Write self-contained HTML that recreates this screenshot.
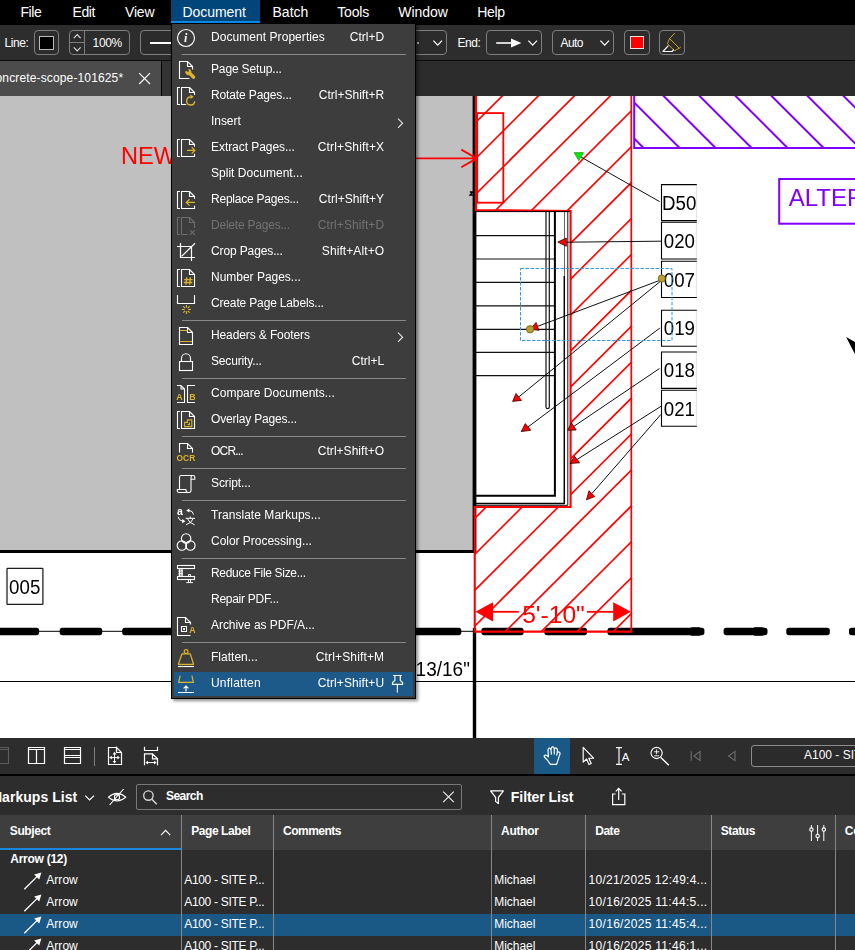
<!DOCTYPE html>
<html lang="en">
<head>
<meta charset="utf-8">
<title>Revu - Document menu</title>
<style>
*{box-sizing:border-box;margin:0;padding:0}
html,body{width:855px;height:950px;overflow:hidden;background:#2b2b2b}
body{position:relative;font-family:"Liberation Sans",Arial,sans-serif;color:#fff;font-size:12px}
.t{position:absolute;white-space:pre;line-height:1;display:block}
.abs{position:absolute}
#menubar{position:absolute;left:0;top:0;width:855px;height:25px;background:#000}
#menubar .hl{position:absolute;left:171px;top:0;width:88.6px;height:23px;background:#00467a;border-bottom:2.4px solid #0a8be6}
#toolbar{position:absolute;left:0;top:25px;width:855px;height:36px;background:#2d2d2d;border-bottom:1px solid #0c0c0c}
.ctl{position:absolute;top:5px;height:25px;border:1px solid #7e7e7e;border-radius:4px;background:#2c2c2c}
#tabbar{position:absolute;left:0;top:61px;width:855px;height:35px;background:#2c2c2c}
#tabbar .tab{position:absolute;left:0;top:0;width:161px;height:35px;background:#4c4c4c;border-right:0}
#tabbar .tab2{position:absolute;left:162px;top:0;width:120px;height:35px;background:#333}
#tabbar .gap{position:absolute;left:161px;top:0;width:1px;height:35px;background:#000}
svg.cv{position:absolute;left:0;top:96px;display:block;will-change:transform}
#btool{position:absolute;left:0;top:738px;width:855px;height:36px;background:#2d2d2d}
#bline{position:absolute;left:0;top:774px;width:855px;height:2px;background:#000}
#mkhead{position:absolute;left:0;top:776px;width:855px;height:39px;background:#2d2d2d}
#thead{position:absolute;left:0;top:815px;width:855px;height:35px;background:#3e3e3e}
#tbody{position:absolute;left:0;top:850px;width:855px;height:100px;background:#2d2d2d}
.row{position:absolute;left:0;width:855px;height:22px}
.row.sel{background:#1a5886}
.col{position:absolute;top:815px;width:1px;height:135px;background:#888}
#menu{position:absolute;left:171px;top:23px;width:245px;height:676px;background:#3d3d3d;border:1px solid #000;box-shadow:2px 2px 3px rgba(0,0,0,.45)}
#menu .sep{position:absolute;left:10px;width:224px;height:1px;background:#8a8a8a}
#menu .hl{position:absolute;left:2px;top:648px;width:239px;height:24px;background:#1d5a8a}
svg.ic{position:absolute;left:0;top:0;overflow:visible}
</style>
</head>
<body>
<div id="menubar"><div class="hl"></div><span class="t" style="left:20.50px;top:5.15px;font-size:14px;letter-spacing:-0.441px">File</span><span class="t" style="left:72.50px;top:5.15px;font-size:14px;letter-spacing:-0.381px">Edit</span><span class="t" style="left:125.00px;top:5.15px;font-size:14px;letter-spacing:-0.173px">View</span><span class="t" style="left:182.50px;top:5.15px;font-size:14px;letter-spacing:-0.064px">Document</span><span class="t" style="left:272.50px;top:5.15px;font-size:14px;letter-spacing:0.017px">Batch</span><span class="t" style="left:337.30px;top:5.15px;font-size:14px;letter-spacing:-0.198px">Tools</span><span class="t" style="left:398.30px;top:5.15px;font-size:14px;letter-spacing:-0.049px">Window</span><span class="t" style="left:477.30px;top:5.15px;font-size:14px;letter-spacing:-0.349px">Help</span></div>
<div id="toolbar"><span class="t" style="left:4.40px;top:11.74px;font-size:12px;letter-spacing:-0.366px">Line:</span><div class="ctl" style="left:34px;width:25px"></div><div class="abs" style="left:39.4px;top:10.5px;width:14.2px;height:14.2px;background:#000;border:1.4px solid #bcbcbc"></div><div class="ctl" style="left:69px;width:61px"></div><div class="abs" style="left:84px;top:5px;width:1px;height:25px;background:#7e7e7e"></div><div class="abs" style="left:69px;top:17px;width:15px;height:1px;background:#7e7e7e"></div><span class="t" style="left:92.60px;top:11.74px;font-size:12px;letter-spacing:-0.351px">100%</span><div class="ctl" style="left:140.2px;width:110px"></div><div class="abs" style="left:150px;top:16.7px;width:60px;height:2px;background:#fff"></div><div class="ctl" style="left:360px;width:86.8px"></div><div class="abs" style="left:417px;top:17.2px;width:2.4px;height:1.4px;background:#aaa"></div><span class="t" style="left:457.40px;top:11.74px;font-size:12px;letter-spacing:-0.422px">End:</span><div class="ctl" style="left:486px;width:55.8px"></div><span class="t" style="left:560.50px;top:11.74px;font-size:12px;letter-spacing:-0.547px">Auto</span><div class="ctl" style="left:552.2px;width:61.6px;background:none"></div><div class="ctl" style="left:624px;width:26px"></div><div class="abs" style="left:630px;top:10.6px;width:14.2px;height:13.8px;background:#ff0000;border:1px solid #f0e0e0"></div><div class="ctl" style="left:659px;width:26px"></div><svg class="ic" width="855" height="36" viewBox="0 25 855 36"><path d="M73.8,38.2 l3.4,-3.6 l3.4,3.6" fill="none" stroke="#ddd" stroke-width="1.1"/><path d="M73.8,47.3 l3.4,3.6 l3.4,-3.6" fill="none" stroke="#ddd" stroke-width="1.1"/><path d="M433.4,40.6 l4.3,4.6 l4.3,-4.6" fill="none" stroke="#fff" stroke-width="1.2"/><path d="M528.4,40.6 l4.3,4.6 l4.3,-4.6" fill="none" stroke="#fff" stroke-width="1.2"/><path d="M600.4,40.6 l4.3,4.6 l4.3,-4.6" fill="none" stroke="#fff" stroke-width="1.2"/><path d="M496.2,43 H512" stroke="#fff" stroke-width="1.6"/><path d="M511,38.4 L521.4,43 L511,47.6 Z" fill="#fff"/><path d="M674.8,33 L669.6,38.6 L679.3,48.3 M669.6,38.6 L668.4,41.4 L667.4,43.6 L674.6,50.8 L676.6,49.6 L679.3,48.3 L680.8,47 M670.8,39.8 L677.8,46.8" fill="none" stroke="#c9a227" stroke-width="1" stroke-linejoin="round"/><path d="M668.4,45.6 L662.9,51.5 H672 L673.8,49.6" fill="none" stroke="#fff" stroke-width="1.1" stroke-linejoin="round"/></svg></div>
<div id="tabbar"><div class="tab"></div><div class="gap"></div><div class="tab2"></div><span class="t" style="left:-10.60px;top:10.54px;font-size:12px;letter-spacing:0.138px">concrete-scope-101625*</span><svg class="ic" width="855" height="35" viewBox="0 61 855 35"><path d="M139.2,73.2 L150,84 M150,73.2 L139.2,84" stroke="#fff" stroke-width="1.15" fill="none"/></svg></div>
<svg class="cv" width="855" height="642" viewBox="0 96 855 642" font-family="'Liberation Sans', Arial, sans-serif"><defs><clipPath id="cpR"><path d="M475.5,96 H631.5 V631.6 H474.5 V507 H570.6 V211 L475.5,210 Z"/></clipPath><clipPath id="cpP"><rect x="634" y="96" width="230" height="52"/></clipPath></defs><rect x="0" y="96" width="855" height="642" fill="#fff"/><rect x="0" y="96" width="474" height="455" fill="#c0c0c0"/><rect x="0" y="550" width="475.5" height="3" fill="#000"/><rect x="472.6" y="96" width="3.8" height="457" fill="#000"/><rect x="472.8" y="628" width="3.4" height="110" fill="#000"/><rect x="0" y="681" width="855" height="1" fill="#000"/><line x1="0" y1="631.3" x2="476" y2="631.3" stroke="#000" stroke-width="1"/><g fill="#000"><rect x="-5.0" y="627.75" width="44.1" height="7.4" rx="2.6"/><rect x="59.7" y="627.75" width="42.5" height="7.4" rx="2.6"/><rect x="122.2" y="627.75" width="55.8" height="7.4" rx="2.6"/><rect x="184.7" y="627.75" width="42.5" height="7.4" rx="2.6"/><rect x="247.2" y="627.75" width="42.5" height="7.4" rx="2.6"/><rect x="309.7" y="627.75" width="42.5" height="7.4" rx="2.6"/><rect x="372.2" y="627.75" width="27.8" height="7.4" rx="2.6"/><rect x="408.0" y="627.75" width="53.3" height="7.4" rx="2.6"/><rect x="481.4" y="627.75" width="42.2" height="7.4" rx="2.6"/><rect x="544.4" y="627.75" width="42.6" height="7.4" rx="2.6"/><rect x="607.5" y="627.75" width="96.9" height="7.4" rx="2.6"/><rect x="723.6" y="627.75" width="43.9" height="7.4" rx="2.6"/><rect x="786.3" y="627.75" width="43.5" height="7.4" rx="2.6"/><rect x="849.0" y="627.75" width="43.0" height="7.4" rx="2.6"/><rect x="690" y="627.2" width="11" height="8.5" rx="2"/><rect x="753" y="627.2" width="11" height="8.5" rx="2"/></g><g stroke="#111" stroke-width="1.15"><line x1="476" y1="235.6" x2="554.5" y2="235.6"/><line x1="476" y1="259.0" x2="554.5" y2="259.0"/><line x1="476" y1="282.4" x2="554.5" y2="282.4"/><line x1="476" y1="305.9" x2="554.5" y2="305.9"/><line x1="476" y1="329.3" x2="554.5" y2="329.3"/><line x1="476" y1="352.4" x2="554.5" y2="352.4"/><line x1="476" y1="375.6" x2="554.5" y2="375.6"/></g><path d="M546,211 V407 Q546,408.6 547.65,408.6 Q549.3,408.6 549.3,407 V211" fill="none" stroke="#111" stroke-width="1.2"/><path d="M476,495.7 H554.9 V211" fill="none" stroke="#000" stroke-width="2"/><path d="M476,503.4 H564.3" fill="none" stroke="#000" stroke-width="1.5"/><path d="M564.3,504 V276" fill="none" stroke="#000" stroke-width="1.5"/><path d="M564.5,276 V211" fill="none" stroke="#666" stroke-width="1"/><path d="M476,505.3 H567.8 V211" fill="none" stroke="#111" stroke-width="1"/><g clip-path="url(#cpR)" stroke="#ff0000" stroke-width="1.65"><line x1="364.21" y1="90" x2="-287.35" y2="740"/><line x1="400.21" y1="90" x2="-251.35" y2="740"/><line x1="436.21" y1="90" x2="-215.35" y2="740"/><line x1="472.21" y1="90" x2="-179.35" y2="740"/><line x1="508.21" y1="90" x2="-143.35" y2="740"/><line x1="544.21" y1="90" x2="-107.35" y2="740"/><line x1="580.21" y1="90" x2="-71.35" y2="740"/><line x1="616.21" y1="90" x2="-35.35" y2="740"/><line x1="652.21" y1="90" x2="0.65" y2="740"/><line x1="688.21" y1="90" x2="36.65" y2="740"/><line x1="724.21" y1="90" x2="72.65" y2="740"/><line x1="760.21" y1="90" x2="108.65" y2="740"/><line x1="796.21" y1="90" x2="144.65" y2="740"/><line x1="832.21" y1="90" x2="180.65" y2="740"/><line x1="868.21" y1="90" x2="216.65" y2="740"/><line x1="904.21" y1="90" x2="252.65" y2="740"/><line x1="940.21" y1="90" x2="288.65" y2="740"/><line x1="976.21" y1="90" x2="324.65" y2="740"/><line x1="1012.21" y1="90" x2="360.65" y2="740"/><line x1="1048.21" y1="90" x2="396.65" y2="740"/><line x1="1084.21" y1="90" x2="432.65" y2="740"/><line x1="1120.21" y1="90" x2="468.65" y2="740"/><line x1="1156.21" y1="90" x2="504.65" y2="740"/><line x1="1192.21" y1="90" x2="540.65" y2="740"/><line x1="1228.21" y1="90" x2="576.65" y2="740"/><line x1="1264.21" y1="90" x2="612.65" y2="740"/><line x1="1300.21" y1="90" x2="648.65" y2="740"/></g><g fill="none" stroke="#ff0000"><path d="M476,96 V210 L570.6,211 V507 H474.75 V631.6 H632" stroke-width="2.1"/><path d="M631.3,632.6 V96" stroke-width="1.7"/><rect x="477.2" y="113.1" width="26.1" height="89.6" stroke-width="1.8"/><path d="M171,158.4 H476.5 M461.3,149.6 L476.8,158.4 L461.3,167.2" stroke-width="1.8"/></g><text x="121.0" y="164.2" font-size="23.00" fill="#ff0000" textLength="55.05" lengthAdjust="spacingAndGlyphs">NEW</text><path d="M469.8,192 H472.8 L470,195.2 H473" stroke="#000" stroke-width="1.3" fill="none"/><path d="M476,211.6 H569.6" stroke="#000" stroke-width="1" fill="none"/><g fill="#ff0000" stroke="#ff0000"><line x1="492" y1="611.8" x2="518.8" y2="611.8" stroke-width="1.8"/><line x1="587" y1="611.8" x2="614" y2="611.8" stroke-width="1.8"/><polygon points="475.5,611.8 493,602.2 493,621.4" stroke="none"/><polygon points="630.8,611.8 613.2,602.2 613.2,621.4" stroke="none"/></g><text x="522.2" y="623.3" font-size="24.60" fill="#ff0000" textLength="62.66" lengthAdjust="spacingAndGlyphs">5'-10"</text><g clip-path="url(#cpP)" stroke="#7f00ff" stroke-width="2"><line x1="585.6" y1="90" x2="655.6" y2="160"/><line x1="621.6" y1="90" x2="691.6" y2="160"/><line x1="657.6" y1="90" x2="727.6" y2="160"/><line x1="693.6" y1="90" x2="763.6" y2="160"/><line x1="729.6" y1="90" x2="799.6" y2="160"/><line x1="765.6" y1="90" x2="835.6" y2="160"/><line x1="801.6" y1="90" x2="871.6" y2="160"/><line x1="837.6" y1="90" x2="907.6" y2="160"/><line x1="873.6" y1="90" x2="943.6" y2="160"/><line x1="909.6" y1="90" x2="979.6" y2="160"/><line x1="945.6" y1="90" x2="1015.6" y2="160"/><line x1="981.6" y1="90" x2="1051.6" y2="160"/></g><path d="M634.2,96 V148 H856" fill="none" stroke="#7f00ff" stroke-width="2"/><rect x="779.2" y="179" width="90" height="44.7" fill="#fff" stroke="#7f00ff" stroke-width="2"/><text x="788.7" y="206.2" font-size="23.90" fill="#7f00ff" textLength="75.58" lengthAdjust="spacingAndGlyphs">ALTER</text><text x="415.6" y="675.6" font-size="19.40" fill="#000" textLength="54.30" lengthAdjust="spacingAndGlyphs">13/16"</text><rect x="7" y="568.3" width="35.9" height="36" rx="0.6" fill="#fff" stroke="#1c1c1c" stroke-width="1.25"/><text x="9.1" y="593.8" font-size="19.60" fill="#000" textLength="31.19" lengthAdjust="spacingAndGlyphs">005</text><rect x="661.5" y="184.6" width="34.89999999999998" height="36.0" fill="#fff" stroke="none"/><line x1="696.4" y1="184.6" x2="696.4" y2="220.6" stroke="#dcdcdc" stroke-width="0.9"/><path d="M696.8,184.6 H661.5 V220.6 H696.8" fill="none" stroke="#000" stroke-width="1.1"/><text x="662.1" y="209.7" font-size="19.60" fill="#000" textLength="34.30" lengthAdjust="spacingAndGlyphs">D50</text><rect x="661.5" y="222.3" width="34.89999999999998" height="36.69999999999999" fill="#fff" stroke="none"/><line x1="696.4" y1="222.3" x2="696.4" y2="259.0" stroke="#dcdcdc" stroke-width="0.9"/><path d="M696.8,222.3 H661.5 V259.0 H696.8" fill="none" stroke="#000" stroke-width="1.1"/><text x="663.8000000000001" y="247.6" font-size="19.60" fill="#000" textLength="31.19" lengthAdjust="spacingAndGlyphs">020</text><rect x="661.5" y="261.3" width="34.89999999999998" height="36.19999999999999" fill="#fff" stroke="none"/><line x1="696.4" y1="261.3" x2="696.4" y2="297.5" stroke="#dcdcdc" stroke-width="0.9"/><path d="M696.8,261.3 H661.5 V297.5 H696.8" fill="none" stroke="#000" stroke-width="1.1"/><text x="663.8000000000001" y="286.7" font-size="19.60" fill="#000" textLength="31.19" lengthAdjust="spacingAndGlyphs">007</text><rect x="661.5" y="310.2" width="34.89999999999998" height="36.10000000000002" fill="#fff" stroke="none"/><line x1="696.4" y1="310.2" x2="696.4" y2="346.3" stroke="#dcdcdc" stroke-width="0.9"/><path d="M696.8,310.2 H661.5 V346.3 H696.8" fill="none" stroke="#000" stroke-width="1.1"/><text x="663.8000000000001" y="335.4" font-size="19.60" fill="#000" textLength="31.19" lengthAdjust="spacingAndGlyphs">019</text><rect x="661.5" y="352.0" width="34.89999999999998" height="36.39999999999998" fill="#fff" stroke="none"/><line x1="696.4" y1="352.0" x2="696.4" y2="388.4" stroke="#dcdcdc" stroke-width="0.9"/><path d="M696.8,352.0 H661.5 V388.4 H696.8" fill="none" stroke="#000" stroke-width="1.1"/><text x="663.8000000000001" y="377.2" font-size="19.60" fill="#000" textLength="31.19" lengthAdjust="spacingAndGlyphs">018</text><rect x="661.5" y="390.2" width="34.89999999999998" height="36.10000000000002" fill="#fff" stroke="none"/><line x1="696.4" y1="390.2" x2="696.4" y2="426.3" stroke="#dcdcdc" stroke-width="0.9"/><path d="M696.8,390.2 H661.5 V426.3 H696.8" fill="none" stroke="#000" stroke-width="1.1"/><text x="663.8000000000001" y="415.5" font-size="19.60" fill="#000" textLength="31.19" lengthAdjust="spacingAndGlyphs">021</text><line x1="659.6" y1="201.6" x2="581" y2="157" stroke="#111" stroke-width="1"/><polygon points="574,152.6 583.6,152.6 578.8,160.8" fill="#00e800" stroke="#0a7a0a" stroke-width="0.5"/><line x1="661" y1="241.2" x2="566.3" y2="242.2" stroke="#111" stroke-width="1"/><polygon points="557.8,242.1 566.3,238 566.3,246.3" fill="#f00" stroke="#3a0000" stroke-width="0.8" stroke-linejoin="round"/><line x1="662" y1="279.5" x2="537.5" y2="326.4" stroke="#111" stroke-width="1"/><polygon points="530.1,329.3 536,322.5 538.9,330.3" fill="#f00" stroke="#3a0000" stroke-width="0.8" stroke-linejoin="round"/><line x1="662" y1="280" x2="518.8" y2="396.9" stroke="#111" stroke-width="1"/><polygon points="512.6,401.4 516,393.5 521.5,400.4" fill="#f00" stroke="#3a0000" stroke-width="0.8" stroke-linejoin="round"/><line x1="659.8" y1="328.1" x2="528.0" y2="427.0" stroke="#111" stroke-width="1"/><polygon points="521.2,431.6 525.3,423.6 530.7,430.3" fill="#f00" stroke="#3a0000" stroke-width="0.8" stroke-linejoin="round"/><line x1="659.5" y1="368.5" x2="573.8" y2="426.4" stroke="#111" stroke-width="1"/><polygon points="567.6,430.3 571.4,422.7 576.2,430" fill="#f00" stroke="#3a0000" stroke-width="0.8" stroke-linejoin="round"/><line x1="660.9" y1="406.4" x2="577.0" y2="459.5" stroke="#111" stroke-width="1"/><polygon points="570.1,463.5 574.5,456.2 579.6,462.8" fill="#f00" stroke="#3a0000" stroke-width="0.8" stroke-linejoin="round"/><line x1="660.9" y1="414.4" x2="591.9" y2="493.6" stroke="#111" stroke-width="1"/><polygon points="586.5,499.8 589,490.7 594.7,496.6" fill="#f00" stroke="#3a0000" stroke-width="0.8" stroke-linejoin="round"/><rect x="520.5" y="268.5" width="151.5" height="72" fill="none" stroke="#2f9ae8" stroke-width="1" stroke-dasharray="3.4 1.6"/><circle cx="530.1" cy="329.3" r="3.7" fill="#b8a030" stroke="#6b5c10" stroke-width="0.8"/><circle cx="661.8" cy="278.5" r="3.6" fill="#b8a030" stroke="#6b5c10" stroke-width="0.8"/><polygon points="846.1,337 856,342.6 856,357 854.7,353.6" fill="#000"/></svg>
<div id="btool"><div class="abs" style="left:534px;top:0;width:36.2px;height:35.6px;background:#1a5886"></div><div class="abs" style="left:751.4px;top:7.4px;width:120px;height:21.4px;border:1px solid #8c8c8c;border-radius:3px;background:#2b2b2b"></div><span class="t" style="left:804.00px;top:11.44px;font-size:12px">A100 - SITE PLAN</span><svg class="ic" width="855" height="36" viewBox="0 738 855 36" fill="none" stroke="#fff" stroke-width="1.15"><path d="M-4,747.5 H8.5 V763.5 H-4 M-4,749.5 H8.5" stroke="#5c5c5c"/><path d="M28.5,747.5 H44.5 V763.5 H28.5 Z M28.5,749.5 H44.5 M36.5,749.5 V763.5" stroke-width="1.2"/><path d="M64.5,747.5 H80.5 V763.5 H64.5 Z M64.5,749.5 H80.5 M64.5,755.5 H80.5 M64.5,757.5 H80.5" stroke-width="1.2"/><path d="M94.5,747 V766" stroke="#808080" stroke-width="1"/><path d="M116.5,747.5 H108.5 V764.5 H121.5 V752.5 L116.5,747.5 V752.5 H121.5" stroke-width="1.2"/><path d="M114.5,753.6 V762 M110.8,757.6 H118.4" stroke-width="1"/><path d="M114.5,751.8 L116.4,754.4 H112.6 Z M114.5,763.6 L116.4,761 H112.6 Z M109.2,757.6 L111.8,755.7 V759.5 Z M119.9,757.6 L117.3,755.7 V759.5 Z" fill="#fff" stroke="none"/><path d="M144.5,746.8 V750.5 H157.5 V746.8" stroke-width="1.2"/><path d="M144.5,765.2 V753.8 H152.5 L157.5,758.8 V765.2 M152.5,753.8 V758.8 H157.5" stroke-width="1.2"/><path d="M147.4,762.6 H154.6" stroke-width="1"/><path d="M145.4,762.6 L148,760.8 V764.4 Z M156.6,762.6 L154,760.8 V764.4 Z" fill="#fff" stroke="none"/><path d="M550.4,764.4 L547.6,760.4 L544.4,757 Q543.6,755.4 545.2,755 Q546.6,754.8 548.4,756.8 L548,750 Q548.2,748 549.6,748.2 Q550.8,748.4 551,750 L551.2,748.4 Q551.6,746.6 552.9,746.8 Q554.2,747 554.3,748.6 L554.5,749.4 Q555,747.8 556.2,748 Q557.5,748.4 557.4,750 L557.3,752.6 Q558.4,751.6 559.4,752.2 Q560.4,753 559.8,754.6 L557.8,760.6 L556.6,764.4 Z M551,750 L551.4,754.6 M554.3,748.8 L554.2,754.4 M557.3,752.6 L556.6,755.6" stroke-width="1.2" stroke-linejoin="round"/><path d="M583.2,747.4 V762.2 L586.6,759 L589,764.6 L591.2,763.6 L588.8,758.2 H593.6 Z" stroke-width="1.15" stroke-linejoin="round"/><path d="M616,747.6 H622 M616,764.4 H622 M619,747.6 V764.4" stroke-width="1.15"/></svg><span class="t" style="left:621.80px;top:14.07px;font-size:11.5px">A</span><svg class="ic" width="855" height="36" viewBox="0 738 855 36" fill="none" stroke="#fff" stroke-width="1.15"><circle cx="656.6" cy="753" r="5.6"/><path d="M660.8,757.4 L668.8,765.2" stroke-width="1.4"/><path d="M654,751.8 H659.2 M656.6,749.4 V754.2 M654.2,755.8 H659" stroke-width="0.9"/><path d="M691.2,751.2 V760.8" stroke="#6c6c6c"/><path d="M700,751.4 L694,756 L700,760.6 Z" stroke="#6c6c6c"/><path d="M735,751.4 L728.6,756 L735,760.6 Z" stroke="#6c6c6c"/></svg></div><div id="bline"></div>
<div id="mkhead"><span class="t" style="left:-9.60px;top:14.15px;font-size:14px;letter-spacing:0.037px;font-weight:700">Markups List</span><div class="abs" style="left:136px;top:8px;width:326px;height:26px;border:1px solid #787878;border-radius:2px;background:#2d2d2d"></div><span class="t" style="left:166.00px;top:13.84px;font-size:12px;letter-spacing:-0.539px;font-weight:700">Search</span><span class="t" style="left:510.80px;top:14.15px;font-size:14px;letter-spacing:-0.047px;font-weight:700">Filter List</span><svg class="ic" width="855" height="39" viewBox="0 776 855 39" fill="none" stroke="#fff" stroke-width="1.2"><path d="M85.2,795.6 L89.6,800 L94,795.6" stroke-width="1.2"/><path d="M108.4,797.2 Q117,789.6 125.8,797.2 Q117,804.8 108.4,797.2 Z M123.6,789 L109.6,805" stroke-width="1.1"/><circle cx="117" cy="797.2" r="2.6" stroke-width="1.1"/><circle cx="148.4" cy="795.6" r="4.7" stroke="#d4d4d4" stroke-width="1.4"/><path d="M151.8,799.2 L156.8,804.2" stroke="#d4d4d4" stroke-width="1.6"/><path d="M443.2,791.6 L453.8,802.2 M453.8,791.6 L443.2,802.2" stroke="#e8e8e8" stroke-width="1.2"/><path d="M490.6,790.8 H503.4 L498.4,797.4 V803.6 L495.6,801.4 V797.4 Z" stroke-width="1.2" stroke-linejoin="round"/><path d="M615.6,794 H612.6 V804.6 H624.8 V794 H621.8 M618.7,800 V788.6 M615.8,791.4 L618.7,788.4 L621.6,791.4" stroke-width="1.2"/></svg></div>
<div id="thead"><span class="t" style="left:9.80px;top:9.84px;font-size:12px;letter-spacing:-0.392px;font-weight:700">Subject</span><span class="t" style="left:191.20px;top:9.84px;font-size:12px;letter-spacing:-0.416px;font-weight:700">Page Label</span><span class="t" style="left:283.00px;top:9.84px;font-size:12px;letter-spacing:-0.502px;font-weight:700">Comments</span><span class="t" style="left:501.00px;top:9.84px;font-size:12px;letter-spacing:-0.288px;font-weight:700">Author</span><span class="t" style="left:595.20px;top:9.84px;font-size:12px;letter-spacing:-0.454px;font-weight:700">Date</span><span class="t" style="left:720.70px;top:9.84px;font-size:12px;letter-spacing:-0.398px;font-weight:700">Status</span><span class="t" style="left:844.70px;top:9.84px;font-size:12px;letter-spacing:-0.209px;font-weight:700">Color</span><div class="abs" style="left:0;top:33px;width:181px;height:2.2px;background:#1a86dc"></div><svg class="ic" width="855" height="35" viewBox="0 815 855 35" fill="none" stroke="#fff" stroke-width="1.1"><path d="M161,835.2 L165.6,830.4 L170.2,835.2"/><path d="M811.4,825 V841 M817.6,825 V841 M823.8,825 V841" stroke-width="1"/><circle cx="811.4" cy="829.6" r="1.7" fill="#3e3e3e"/><circle cx="817.6" cy="836" r="1.7" fill="#3e3e3e"/><circle cx="823.8" cy="829.6" r="1.7" fill="#3e3e3e"/></svg></div><div id="tbody"><span class="t" style="left:10.30px;top:2.74px;font-size:12px;letter-spacing:-0.264px;font-weight:700">Arrow (12)</span><div class="row" style="top:20px"><span class="t" style="left:46.30px;top:4.14px;font-size:12px;letter-spacing:0.031px">Arrow</span><span class="t" style="left:184.20px;top:4.14px;font-size:12px;letter-spacing:-0.310px">A100 - SITE P...</span><span class="t" style="left:494.20px;top:4.14px;font-size:12px;letter-spacing:-0.023px">Michael</span><span class="t" style="left:588.60px;top:4.14px;font-size:12px;letter-spacing:0.255px">10/21/2025 12:49:4...</span><svg class="ic" width="60" height="22" viewBox="0 870 60 22"><path d="M24.3,889.3 L38,875.6" stroke="#fff" stroke-width="1.3" fill="none"/><path d="M41.4,872.4 L34.2,874.6 L39.2,879.6 Z" fill="#fff"/></svg></div><div class="row" style="top:42px"><span class="t" style="left:46.30px;top:4.14px;font-size:12px;letter-spacing:0.031px">Arrow</span><span class="t" style="left:184.20px;top:4.14px;font-size:12px;letter-spacing:-0.310px">A100 - SITE P...</span><span class="t" style="left:494.20px;top:4.14px;font-size:12px;letter-spacing:-0.023px">Michael</span><span class="t" style="left:588.60px;top:4.14px;font-size:12px;letter-spacing:0.298px">10/16/2025 11:44:5...</span><svg class="ic" width="60" height="22" viewBox="0 892 60 22"><path d="M24.3,911.3 L38,897.6" stroke="#fff" stroke-width="1.3" fill="none"/><path d="M41.4,894.4 L34.2,896.6 L39.2,901.6 Z" fill="#fff"/></svg></div><div class="row sel" style="top:64px"><span class="t" style="left:46.30px;top:4.14px;font-size:12px;letter-spacing:0.031px">Arrow</span><span class="t" style="left:184.20px;top:4.14px;font-size:12px;letter-spacing:-0.310px">A100 - SITE P...</span><span class="t" style="left:494.20px;top:4.14px;font-size:12px;letter-spacing:-0.023px">Michael</span><span class="t" style="left:588.60px;top:4.14px;font-size:12px;letter-spacing:0.298px">10/16/2025 11:45:4...</span><svg class="ic" width="60" height="22" viewBox="0 914 60 22"><path d="M24.3,933.3 L38,919.6" stroke="#fff" stroke-width="1.3" fill="none"/><path d="M41.4,916.4 L34.2,918.6 L39.2,923.6 Z" fill="#fff"/></svg></div><div class="row" style="top:86px"><span class="t" style="left:46.30px;top:4.04px;font-size:12px;letter-spacing:0.031px">Arrow</span><span class="t" style="left:184.20px;top:4.04px;font-size:12px;letter-spacing:-0.310px">A100 - SITE P...</span><span class="t" style="left:494.20px;top:4.04px;font-size:12px;letter-spacing:-0.023px">Michael</span><span class="t" style="left:588.60px;top:4.04px;font-size:12px;letter-spacing:0.298px">10/16/2025 11:46:1...</span><svg class="ic" width="60" height="22" viewBox="0 936 60 22"><path d="M24.3,955.3 L38,941.6" stroke="#fff" stroke-width="1.3" fill="none"/><path d="M41.4,938.4 L34.2,940.6 L39.2,945.6 Z" fill="#fff"/></svg></div></div><div class="col" style="left:180.5px"></div><div class="col" style="left:273.0px"></div><div class="col" style="left:491.0px"></div><div class="col" style="left:584.9px"></div><div class="col" style="left:710.9px"></div><div class="col" style="left:835.0px"></div>
<div id="menu"><div class="hl"></div><span class="t" style="left:39.00px;top:6.84px;font-size:12px;letter-spacing:0.057px">Document Properties</span><span class="t" style="left:177.80px;top:6.84px;font-size:12px;letter-spacing:0.009px">Ctrl+D</span><div class="sep" style="top:30.0px"></div><span class="t" style="left:39.00px;top:38.84px;font-size:12px;letter-spacing:-0.149px">Page Setup...</span><span class="t" style="left:39.00px;top:64.84px;font-size:12px;letter-spacing:-0.128px">Rotate Pages...</span><span class="t" style="left:146.80px;top:64.84px;font-size:12px;letter-spacing:0.003px">Ctrl+Shift+R</span><span class="t" style="left:39.00px;top:90.84px;font-size:12px;letter-spacing:-0.053px">Insert</span><span class="t" style="left:39.00px;top:116.84px;font-size:12px;letter-spacing:-0.056px">Extract Pages...</span><span class="t" style="left:145.80px;top:116.84px;font-size:12px;letter-spacing:0.141px">Ctrl+Shift+X</span><span class="t" style="left:39.00px;top:142.84px;font-size:12px;letter-spacing:0.025px">Split Document...</span><span class="t" style="left:39.00px;top:168.84px;font-size:12px;letter-spacing:-0.224px">Replace Pages...</span><span class="t" style="left:146.80px;top:168.84px;font-size:12px;letter-spacing:0.058px">Ctrl+Shift+Y</span><span class="t" style="left:39.00px;top:194.84px;font-size:12px;letter-spacing:-0.217px;color:#727272">Delete Pages...</span><span class="t" style="left:145.80px;top:194.84px;font-size:12px;letter-spacing:0.087px;color:#727272">Ctrl+Shift+D</span><span class="t" style="left:39.00px;top:220.84px;font-size:12px;letter-spacing:-0.121px">Crop Pages...</span><span class="t" style="left:149.80px;top:220.84px;font-size:12px;letter-spacing:0.093px">Shift+Alt+O</span><span class="t" style="left:39.00px;top:246.84px;font-size:12px;letter-spacing:-0.016px">Number Pages...</span><span class="t" style="left:39.00px;top:272.84px;font-size:12px;letter-spacing:-0.156px">Create Page Labels...</span><div class="sep" style="top:296.0px"></div><span class="t" style="left:39.00px;top:304.84px;font-size:12px;letter-spacing:-0.113px">Headers &amp; Footers</span><span class="t" style="left:39.00px;top:330.84px;font-size:12px;letter-spacing:-0.152px">Security...</span><span class="t" style="left:179.80px;top:330.84px;font-size:12px;letter-spacing:0.009px">Ctrl+L</span><div class="sep" style="top:354.0px"></div><span class="t" style="left:39.00px;top:362.84px;font-size:12px;letter-spacing:0.020px">Compare Documents...</span><span class="t" style="left:39.00px;top:388.84px;font-size:12px;letter-spacing:-0.182px">Overlay Pages...</span><div class="sep" style="top:412.0px"></div><span class="t" style="left:39.00px;top:420.84px;font-size:12px;letter-spacing:-0.812px">OCR...</span><span class="t" style="left:145.80px;top:420.84px;font-size:12px;letter-spacing:0.031px">Ctrl+Shift+O</span><div class="sep" style="top:444.0px"></div><span class="t" style="left:39.00px;top:452.84px;font-size:12px;letter-spacing:-0.099px">Script...</span><div class="sep" style="top:476.0px"></div><span class="t" style="left:39.00px;top:484.84px;font-size:12px;letter-spacing:0.043px">Translate Markups...</span><span class="t" style="left:39.00px;top:510.84px;font-size:12px;letter-spacing:-0.030px">Color Processing...</span><div class="sep" style="top:534.0px"></div><span class="t" style="left:39.00px;top:542.84px;font-size:12px;letter-spacing:-0.312px">Reduce File Size...</span><span class="t" style="left:39.00px;top:568.84px;font-size:12px;letter-spacing:-0.274px">Repair PDF...</span><span class="t" style="left:39.00px;top:594.84px;font-size:12px;letter-spacing:-0.048px">Archive as PDF/A...</span><div class="sep" style="top:618.0px"></div><span class="t" style="left:39.00px;top:626.84px;font-size:12px;letter-spacing:0.011px">Flatten...</span><span class="t" style="left:143.80px;top:626.84px;font-size:12px;letter-spacing:0.143px">Ctrl+Shift+M</span><span class="t" style="left:39.00px;top:652.84px;font-size:12px;letter-spacing:0.197px">Unflatten</span><span class="t" style="left:145.80px;top:652.84px;font-size:12px;letter-spacing:0.087px">Ctrl+Shift+U</span><svg class="ic" width="243" height="672" viewBox="172 24 243 672" font-family="'Liberation Sans',Arial,sans-serif"><g transform="translate(171,24)"><circle cx="15" cy="14" r="8.5" fill="none" stroke="#fff" stroke-width="1.15"/><text x="13.1" y="18.3" font-family="'Liberation Serif', serif" font-style="italic" font-weight="700" font-size="12" fill="#fff">i</text></g><g transform="translate(171,56)"><path d="M16.5,5.5 H8.5 V22.5 H18.4 M21.5,10.0 V13.4 M16.5,5.0 V10.5 H22.0 M16.5,5.5 L21.5,10.5" fill="none" stroke="#fff" stroke-width="1.1" stroke-linejoin="miter"/><path d="M14,15.7 L15.3,14.7 L16.7,16.1 L18,14.9 L17.3,13.1 Q19.8,12.9 20.3,15.2 L20.4,16.5 L24.1,20.3 L24.3,21.7 L23,23 L21.7,22.8 L18,19.1 Q14.9,19.6 14,15.7 Z" fill="#dcb42c"/></g><g transform="translate(171,82)"><path d="M9.0,5.5 H6.5 V22.5 H9.0" fill="none" stroke="#fff" stroke-width="1.1" /><path d="M18.5,5.5 H10.5 V22.5 H15.2 M23.5,10.0 V13 M18.5,5.0 V10.5 H24.0 M18.5,5.5 L23.5,10.5" fill="none" stroke="#fff" stroke-width="1.1" stroke-linejoin="miter"/><path d="M19.6,15 A4,4 0 1 0 23.7,19.4" fill="none" stroke="#dcb42c" stroke-width="1.35"/><path d="M19.3,12.4 L22.8,14.8 L19.5,17.1 Z" fill="#dcb42c"/></g><path d="M398,118.6 L402.6,123.2 L398,127.8" fill="none" stroke="#e8e8e8" stroke-width="1.1"/><g transform="translate(171,134)"><path d="M9.0,5.5 H6.5 V22.5 H9.0" fill="none" stroke="#fff" stroke-width="1.1" /><path d="M18.5,5.5 H10.5 V22.5 H24.0 M23.5,10.0 V12.8 M23.5,19.8 V23.0 M18.5,5.0 V10.5 H24.0 M18.5,5.5 L23.5,10.5" fill="none" stroke="#fff" stroke-width="1.1" stroke-linejoin="miter"/><path d="M16,16.4 H23.6 M20.6,13.2 L23.9,16.4 L20.6,19.6" fill="none" stroke="#dcb42c" stroke-width="1.25" /></g><g transform="translate(171,186)"><path d="M9.0,5.5 H6.5 V22.5 H9.0" fill="none" stroke="#fff" stroke-width="1.1" /><path d="M18.5,5.5 H10.5 V22.5 H24.0 M23.5,10.0 V12.8 M23.5,19.8 V23.0 M18.5,5.0 V10.5 H24.0 M18.5,5.5 L23.5,10.5" fill="none" stroke="#fff" stroke-width="1.1" stroke-linejoin="miter"/><path d="M24,16.4 H15.6 M18.6,13.2 L15.3,16.4 L18.6,19.6" fill="none" stroke="#dcb42c" stroke-width="1.25" /></g><g transform="translate(171,212)"><path d="M9.0,5.5 H6.5 V22.5 H9.0" fill="none" stroke="#6c6c6c" stroke-width="1.1" /><path d="M18.5,5.5 H10.5 V22.5 H16.8 M23.5,10.0 V16 M18.5,5.0 V10.5 H24.0 M18.5,5.5 L23.5,10.5" fill="none" stroke="#6c6c6c" stroke-width="1.1" stroke-linejoin="miter"/><path d="M19,18.2 L23.9,22.9 M23.9,18.2 L19,22.9" fill="none" stroke="#6c6c6c" stroke-width="1.1" /></g><g transform="translate(171,238)"><path d="M9.5,5 V19.5 H24 M6,8.5 H20.5 V23 M10.6,18.4 L24,5.2" fill="none" stroke="#fff" stroke-width="1.2" /></g><g transform="translate(171,264)"><path d="M9.0,5.5 H6.5 V22.5 H9.0" fill="none" stroke="#fff" stroke-width="1.1" /><path d="M18.5,5.5 H10.5 V22.5 H24.0 M23.5,10.0 V22.5 M18.5,5.0 V10.5 H24.0 M18.5,5.5 L23.5,10.5" fill="none" stroke="#fff" stroke-width="1.1" stroke-linejoin="miter"/><path d="M15.7,13.3 L15,20.8 M19.3,13.3 L18.6,20.8 M13.2,15.6 H21.6 M12.8,18.5 H21.2" fill="none" stroke="#dcb42c" stroke-width="1.3" /></g><g transform="translate(171,290)"><path d="M6.5,5 V13.5 H23.5 V5" fill="none" stroke="#fff" stroke-width="1.1" /><path d="M15.4,15 V17.7 M15.4,21.3 V24 M10.9,19.5 H13.6 M17.2,19.5 H19.9 M12.2,16.3 L14.1,18.2 M16.7,20.8 L18.6,22.7 M18.6,16.3 L16.7,18.2 M14.1,20.8 L12.2,22.7" fill="none" stroke="#dcb42c" stroke-width="1.1" /></g><path d="M398,332.6 L402.6,337.2 L398,341.8" fill="none" stroke="#e8e8e8" stroke-width="1.1"/><g transform="translate(171,322)"><path d="M16.5,5.5 H8.5 V22.5 H22.0 M21.5,10.0 V22.5 M16.5,5.0 V10.5 H22.0 M16.5,5.5 L21.5,10.5" fill="none" stroke="#fff" stroke-width="1.1" stroke-linejoin="miter"/><path d="M9.2,8.5 H16.5 M9.2,19.5 H21" fill="none" stroke="#dcb42c" stroke-width="1.1" /></g><g transform="translate(171,348)"><rect x="8.5" y="13.5" width="13" height="9" fill="none" stroke="#fff" stroke-width="1.1"/><path d="M10.5,13.5 V10.4 A4.5,4.7 0 0 1 19.5,10.4 V13.5" fill="none" stroke="#fff" stroke-width="1.1" /></g><g transform="translate(171,380)"><path d="M6,5.5 H10 L13.5,9 V22.5 H6 M10,5.5 V9 H13.5" fill="none" stroke="#fff" stroke-width="1.1" /><path d="M24,5.5 H16.5 V22.5 H24" fill="none" stroke="#fff" stroke-width="1.1" /><text x="5.2" y="19.9" font-size="8.8" font-weight="700" fill="#dcb42c">A</text><text x="18.3" y="19.9" font-size="8.8" font-weight="700" fill="#dcb42c">B</text></g><g transform="translate(171,406)"><path d="M9.0,5.5 H6.5 V22.5 H9.0" fill="none" stroke="#fff" stroke-width="1.1" /><path d="M18.5,5.5 H10.5 V22.5 H24.0 M23.5,10.0 V22.5 M18.5,5.0 V10.5 H24.0 M18.5,5.5 L23.5,10.5" fill="none" stroke="#fff" stroke-width="1.1" stroke-linejoin="miter"/><path d="M13.6,20.6 V16.4 H16.4 V13.9 H20.8 V20.6 Z M16.6,18.6 H18.4 V16.6" fill="none" stroke="#dcb42c" stroke-width="1.1" /></g><g transform="translate(171,438)"><path d="M8.5,14.6 V5.5 H16.5 L21.5,10.5 V14.6 M16.5,5.5 V10.5 H21.5" fill="none" stroke="#fff" stroke-width="1.1" /><text x="5.6" y="22.9" font-size="8.6" font-weight="700" fill="#dcb42c" textLength="18.6" lengthAdjust="spacingAndGlyphs">OCR</text></g><g transform="translate(171,470)"><path d="M20,9.2 V20.6 Q20,22.5 18,22.5 H8.2 Q6.3,22.5 6.3,20.9 V19.5 H15 V20.8 Q15,22.5 17,22.5 M8.5,19.5 V7.4 Q8.5,5.5 10.4,5.5 H21.8 Q23.8,5.5 23.8,7.4 V9.2 H20 V7.6 Q20,5.5 21.6,5.5" fill="none" stroke="#fff" stroke-width="1.1" stroke-linejoin="round"/></g><g transform="translate(171,502)"><text x="6" y="12.7" font-size="10.5" font-weight="700" fill="#fff">a</text><path d="M22.6,12.6 Q22,8.6 17.6,8.4" fill="none" stroke="#fff" stroke-width="1" /><path d="M15.2,8.5 L18.4,6.4 V10.6 Z" fill="#fff"/><path d="M7.2,14.8 Q7.8,18.8 11.8,19.2" fill="none" stroke="#fff" stroke-width="1" /><path d="M14.4,19.2 L11.2,17.1 V21.3 Z" fill="#fff"/><path d="M14.6,16.3 H24 M19.3,14.6 V16.3 M16.4,16.6 Q18,21 23.6,22.8 M22.2,16.6 Q20.6,21 15,22.8" fill="none" stroke="#fff" stroke-width="1" /></g><g transform="translate(171,528)"><circle cx="15.1" cy="10.4" r="4.7" fill="none" stroke="#fff" stroke-width="1.15"/><circle cx="10.9" cy="17.5" r="4.7" fill="none" stroke="#fff" stroke-width="1.15"/><circle cx="19.4" cy="17.5" r="4.7" fill="none" stroke="#fff" stroke-width="1.15"/></g><g transform="translate(171,560)"><rect x="6.5" y="5.5" width="17" height="3" fill="none" stroke="#fff" stroke-width="1.1"/><rect x="6.5" y="16.5" width="17" height="3" fill="none" stroke="#fff" stroke-width="1.1"/><path d="M8.5,8.8 V16.6 M11,8.8 V16.6 M7.4,10.2 H12 M7.4,11.8 H12 M7.4,13.4 H12 M7.4,15 H12 M17.5,16.4 V14.5 H19.5 V16.4 M17.5,19.6 V22.6 M19.5,19.6 V22.6 M15.2,22.6 H22" fill="none" stroke="#fff" stroke-width="0.95" /></g><g transform="translate(171,612)"><path d="M19.5,12.6 V10.5 L14.5,5.5 H6.5 V23.5 H19.5 M14.5,5.5 V10.5 H19.5" fill="none" stroke="#fff" stroke-width="1.1" /><rect x="10.5" y="14.5" width="5" height="5" fill="none" stroke="#fff" stroke-width="1"/><rect x="12.1" y="16.1" width="1.9" height="1.9" fill="#fff"/><text x="18.2" y="21" font-size="8.8" font-weight="700" fill="#dcb42c">A</text></g><g transform="translate(171,644)"><path d="M11,9.8 H19.2 L22.6,20.3 H7.4 Z" fill="none" stroke="#dcb42c" stroke-width="1.2" stroke-linejoin="round"/><circle cx="15.1" cy="7.6" r="1.9" fill="none" stroke="#dcb42c" stroke-width="1.2"/><path d="M7,22.5 H23" fill="none" stroke="#fff" stroke-width="1.1" /></g><g transform="translate(171,670)"><path d="M9.2,5.6 L7.6,12.3 H22.4 L20.9,5.6" fill="none" stroke="#dcb42c" stroke-width="1.2" stroke-linejoin="round"/><path d="M15,21.6 V16.2 M12.6,18.4 L15,16 L17.4,18.4 M7,22.5 H23" fill="none" stroke="#fff" stroke-width="1.15" /></g><g transform="translate(171,670)"><path d="M222,5.5 H231 M223.9,6 V10.5 L221.5,12.6 V14.3 H231.6 V12.6 L229.3,10.5 V6 M226.4,14.8 V22.4" fill="none" stroke="#fff" stroke-width="1.15" stroke-linejoin="miter"/></g></svg></div>
</body>
</html>
